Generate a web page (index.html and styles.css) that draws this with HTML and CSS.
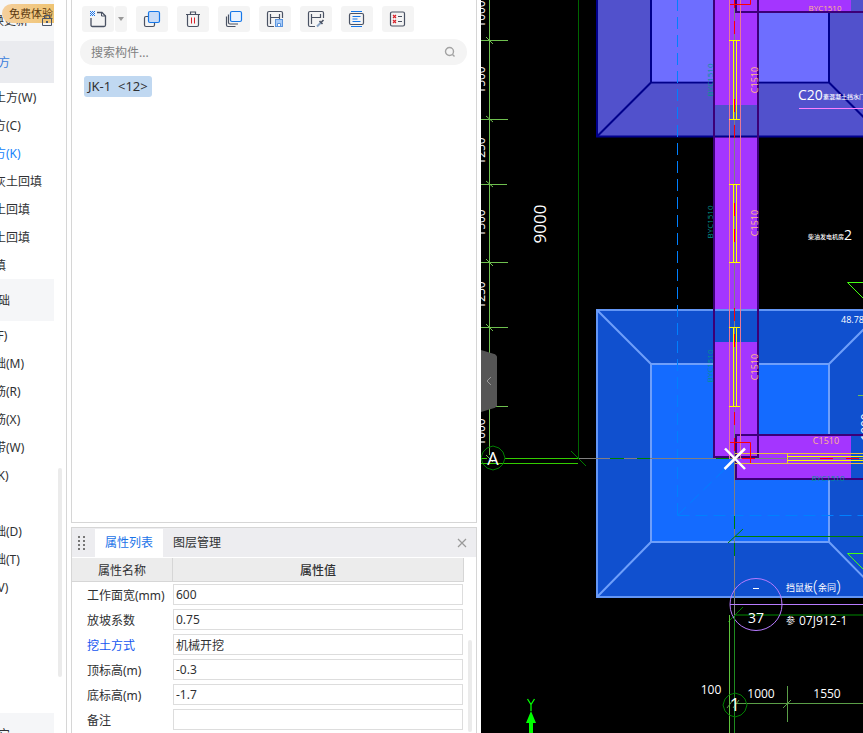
FILE: index.html
```
<!DOCTYPE html>
<html lang="zh-CN">
<head>
  <meta charset="UTF-8">
  <meta name="viewport" content="width=device-width, initial-scale=1.0">
  <title>构件列表</title>
  <link rel="stylesheet" href="styles.css">
</head>
<body>
  <!-- 模块导航 -->
  <nav class="sidebar">
    <div class="sidebar-top">
      <a href="#" class="top-link">切换更新</a>
      <svg class="lock" width="10" height="12" viewBox="0 0 10 12"><path d="M0.5 4.5h9v7h-9zM2.5 4V1.5h5V4" fill="none" stroke="#4a5568"/><path d="M4 7h2v2H4z" fill="#4a5568"/></svg>
      <span class="trial-badge">免费体验</span>
    </div>
    <a href="#" class="group active">土方</a>
    <ul class="nav-list">
      <li><a href="#">大开挖土方(W)</a></li>
      <li><a href="#">基槽土方(C)</a></li>
      <li><a href="#" class="current">基坑土方(K)</a></li>
      <li><a href="#">大开挖灰土回填</a></li>
      <li><a href="#">基槽灰土回填</a></li>
      <li><a href="#">基坑灰土回填</a></li>
      <li><a href="#">房心回填</a></li>
    </ul>
    <a href="#" class="group">基础</a>
    <ul class="nav-list nav-list-base">
      <li><a href="#">基础梁(F)</a></li>
      <li><a href="#">筏板基础(M)</a></li>
      <li><a href="#">筏板主筋(R)</a></li>
      <li><a href="#">筏板负筋(X)</a></li>
      <li><a href="#">基础板带(W)</a></li>
      <li><a href="#">集水坑(K)</a></li>
      <li><a href="#">柱墩(Y)</a></li>
      <li><a href="#">独立基础(D)</a></li>
      <li><a href="#">条形基础(T)</a></li>
      <li><a href="#">桩承台(V)</a></li>
    </ul>
    <a href="#" class="group">其它</a>
    <div class="scroll-thumb nav-thumb"></div>
  </nav>

  <div class="panels">
    <!-- 构件列表 -->
    <section class="panel component-panel">
      <div class="toolbar">
        <div class="split-btn">
          <button class="tool-btn" aria-label="新建">
            <svg width="18" height="18" viewBox="0 0 18 18" fill="none"><path d="M8 2.500h5L16.500 6V15q0 1.500-1.500 1.500H3.500Q2 16.500 2 15V8" stroke="#4a5263" stroke-width="1.300"/><path d="M12.500 2.500V6h4" stroke="#4a5263"/><path d="M1 1h1v1H1zM3 1h1v1H3zM5 1h1v1H5zM2 2h1v1H2zM4 2h1v1H4zM1 3h1v1H1zM3 3h1v1H3zM5 3h1v1H5zM2 4h1v1H2zM4 4h1v1H4zM1 5h1v1H1zM3 5h1v1H3zM5 5h1v1H5z" fill="#1a73e8"/></svg>
          </button>
          <button class="tool-btn drop-btn" aria-label="更多">
            <svg width="6" height="4" viewBox="0 0 6 4"><path d="M0 0h6L3 4z" fill="#999"/></svg>
          </button>
        </div>
        <button class="tool-btn" aria-label="复制">
          <svg width="18" height="18" viewBox="0 0 18 18" fill="none"><path d="M5 6.500H3Q1.500 6.500 1.500 8v7q0 1.500 1.500 1.500h7q1.500 0 1.500-1.500v-2" stroke="#4a5263" stroke-width="1.200"/><rect x="5.500" y="1.500" width="11" height="11" rx="1.500" fill="#c9dcf7" stroke="#1677e8" stroke-width="1.200"/></svg>
        </button>
        <button class="tool-btn" aria-label="删除">
          <svg width="18" height="18" viewBox="0 0 18 18" fill="none"><path d="M2 4.500h14M6.500 4V2h5v2M3.500 5v10q0 1.500 1.500 1.500h8q1.500 0 1.500-1.500V5" stroke="#4a5263" stroke-width="1.200"/><path d="M7.500 7.500v6M10.500 7.500v6" stroke="#d9222a"/></svg>
        </button>
        <button class="tool-btn" aria-label="层间复制">
          <svg width="18" height="18" viewBox="0 0 18 18" fill="none"><path d="M3.500 4.500v8q0 1.500 1.500 1.500h8M1.500 6.500V15q0 1.500 1.500 1.500h7.500" stroke="#4a5263" stroke-width="1.200"/><rect x="5.500" y="1.500" width="11" height="10" rx="1.500" fill="#eaf3fe" stroke="#1677e8" stroke-width="1.200"/></svg>
        </button>
        <button class="tool-btn" aria-label="构件存盘">
          <svg width="18" height="18" viewBox="0 0 18 18" fill="none"><path d="M8 16.500H3Q1.500 16.500 1.500 15V3Q1.500 1.500 3 1.500h12q1.500 0 1.500 1.500v5M4.500 4v10M4.500 7.500h9M13.500 4v5" stroke="#4a5263" stroke-width="1.200"/><rect x="9.500" y="9.500" width="7" height="7" fill="#a9ccf8" stroke="#5b94dd"/><path d="M11.500 16v-2.500h3V16" fill="#fff" stroke="#5b94dd"/></svg>
        </button>
        <button class="tool-btn" aria-label="构件提取">
          <svg width="18" height="18" viewBox="0 0 18 18" fill="none"><path d="M8 16.500H3Q1.500 16.500 1.500 15V3Q1.500 1.500 3 1.500h12q1.500 0 1.500 1.500v5M4.500 4v10M4.500 7.500h9M13.500 4v4" stroke="#4a5263" stroke-width="1.200"/><path d="M10 16.500l4-4" stroke="#8aa4c4" stroke-width="2"/><path d="M12.500 11l3 3M14 12.500l2.500-2.500" stroke="#4a5263" stroke-width="1.600"/></svg>
        </button>
        <button class="tool-btn" aria-label="列表显示">
          <svg width="18" height="18" viewBox="0 0 18 18" fill="none"><rect x="1.500" y="3.500" width="14" height="11" rx="1.500" stroke="#4a5263" stroke-width="1.200"/><path d="M3 1.500h11M3 16.500h11M4.500 6.500h8M4.500 9h5M4.500 11.500h8" stroke="#1677e8" stroke-width="1.200"/></svg>
        </button>
        <button class="tool-btn" aria-label="检查">
          <svg width="18" height="18" viewBox="0 0 18 18" fill="none"><rect x="1.500" y="2" width="14" height="14" rx="1.500" stroke="#4a5263" stroke-width="1.200"/><path d="M4 5l3 3M7 5L4 8M4 10l3 3M7 10l-3 3" stroke="#d9222a" stroke-width="1.200"/><path d="M9 6.500h4M9 11.500h4" stroke="#4a5263"/></svg>
        </button>
      </div>
      <div class="search">
        <input type="text" placeholder="搜索构件..." aria-label="搜索构件">
        <svg width="12" height="12" viewBox="0 0 12 12" fill="none" stroke="#a3a3a3" stroke-width="1.400"><circle cx="5.500" cy="5.500" r="4"/><path d="M8.500 8.500l2 2"/></svg>
      </div>
      <button class="component-item">JK-1&nbsp; &lt;12&gt;</button>
    </section>

    <!-- 属性列表 -->
    <section class="panel property-panel">
      <div class="tabs">
        <svg class="grip" width="8" height="16" viewBox="0 0 8 16" fill="#777"><path d="M0 1h2v2H0zM5 1h2v2H5zM0 5h2v2H0zM5 5h2v2H5zM0 9h2v2H0zM5 9h2v2H5zM0 13h2v2H0zM5 13h2v2H5z"/></svg>
        <button class="tab active">属性列表</button>
        <button class="tab">图层管理</button>
        <button class="close-btn" aria-label="关闭">
          <svg width="10" height="10" viewBox="0 0 10 10" stroke="#999" stroke-width="1.200"><path d="M1 1l8 8M9 1L1 9"/></svg>
        </button>
      </div>
      <table class="props">
        <thead>
          <tr><th class="name-col">属性名称</th><th>属性值</th></tr>
        </thead>
        <tbody>
          <tr><td><label for="p-width">工作面宽(mm)</label></td><td><input id="p-width" type="text" value="600"></td></tr>
          <tr><td><label for="p-slope">放坡系数</label></td><td><input id="p-slope" type="text" value="0.75"></td></tr>
          <tr><td><label for="p-mode" class="public">挖土方式</label></td><td><input id="p-mode" type="text" value="机械开挖"></td></tr>
          <tr><td><label for="p-top">顶标高(m)</label></td><td><input id="p-top" type="text" value="-0.3"></td></tr>
          <tr><td><label for="p-bottom">底标高(m)</label></td><td><input id="p-bottom" type="text" value="-1.7"></td></tr>
          <tr><td><label for="p-note">备注</label></td><td><input id="p-note" type="text"></td></tr>
        </tbody>
      </table>
      <div class="scroll-thumb prop-thumb"></div>
    </section>
  </div>

  <!-- 绘图区 -->
  <main class="canvas">
    <svg class="drawing" viewBox="481 0 382 733" preserveAspectRatio="xMinYMin slice" fill="none">
      <!-- 基坑 -->
      <path d="M597 -150H883V136.500H597z" fill="#5151cc" stroke="#00008b" stroke-width="2"/>
      <path d="M651 -100H829V82.500H651zM651 82.500L597 136.500M829 82.500L883 136.500" stroke="#00008b" stroke-width="2"/>
      <path d="M652 0H828V81.500H652z" fill="#6e6eff"/>
      <path d="M597 310H883V597H597z" fill="#1050cf" stroke="#6396f5" stroke-width="2"/>
      <path d="M651 364H829V542H651z" fill="#146bff"/>
      <path d="M651 364H829V542H651zM651 364L597 310M829 364L883 310M651 542L597 597M829 542L883 597" stroke="#6f9ffa" stroke-width="2"/>

      <!-- 墙体 -->
      <path d="M714 0H758V105H714zM714 137.500H758V309H714zM714 342H758V457H714zM736 435H851V479H736zM736 0H851V12H736z" fill="#a435ff"/>
      <path d="M714 0V457H758V0M870 435H736V479H870M736 0V12H870" stroke="#3c0078" stroke-width="2"/>

      <!-- 虚线轮廓 -->
      <path d="M677.500 -1V516M677.500 515.500H870M677.500 515.500L735 459" stroke="#0080ff" stroke-dasharray="12 6"/>

      <!-- 轴线 -->
      <path d="M734.500 0V620M578 458.500H863" stroke="#808080"/>
      <path d="M610 458.500h14M637 458.500h13M716 458.500h14M734.500 516v13M734.500 543v13" stroke="#007d00"/>
      <path d="M729.500 0V459M740.500 0V459" stroke="#e87898"/>
      <path d="M733.500 40V119M736.500 40V119M729 40.500h11M729 119.500h11M733.500 184V262M736.500 184V262M729 184.500h11M729 262.500h11M733.500 327V406M736.500 327V406M729 327.500h11M729 406.500h11" stroke="#ff0"/>
      <path d="M735 453.500H863M735 463.500H863M787.500 453v10" stroke="#e5c13c"/>
      <path d="M787 456.500H863M787 460.500H863" stroke="#ff0"/>
      <path d="M734.500 0v8M734.500 21v13M734.500 99v13M734.500 125v13M734.500 203v13M734.500 229v13M734.500 308v13M734.500 334v13M734.500 412v13M734.500 438v13M742 458.500h13M820 458.500h13M846 458.500h13M730 4.500h20.500V0M730 442.500h20.500V463" stroke="#f00"/>
      <path d="M725 448.500L745 469M745 448.500L724.500 469" stroke="#fff" stroke-width="2.500"/>

      <!-- 左侧尺寸 -->
      <path d="M489.500 0V455M481 40.500h27M481 119.500h27M481 184.500h26M481 262.500h27M481 327.500h27M481 406.500h27" stroke="#6fc04f"/>
      <path d="M486 37l7 7M486 116l7 6M486 181l7 6M486 259l7 7M486 324l7 7M486 455l7 7" stroke="#6fc04f"/>
      <path d="M578.500 0V458" stroke="#006400"/>
      <path d="M505 458.500H578M481 463.500H578M481 458.500H487" stroke="#3c0"/>
      <path d="M571 451L586 466" stroke="#007d00"/>
      <path d="M493 446l6 2 4 4 2 6-2 6-4 4-6 2-6-2-4-4-2-6 2-6 4-4z" stroke="#007d00"/>
      <g class="dim">
        <text transform="translate(485 14) rotate(-90)">1000</text>
        <text transform="translate(485 80) rotate(-90)">1500</text>
        <text transform="translate(485 151) rotate(-90)">1250</text>
        <text transform="translate(485 223) rotate(-90)">1500</text>
        <text transform="translate(485 295) rotate(-90)">1250</text>
        <text transform="translate(485 432) rotate(-90)">1000</text>
        <text transform="translate(870 427) rotate(-90)">1000</text>
      </g>
      <text class="axis-dim" transform="translate(546 224) rotate(-90)">9000</text>
      <text class="axis-name" x="493" y="465">A</text>

      <!-- 窗编号 -->
      <g class="win-top">
        <text transform="translate(713 80) rotate(-90)">BYC1510</text>
        <text transform="translate(713 222) rotate(-90)">BYC1510</text>
        <text transform="translate(713 366) rotate(-90)">BYC1510</text>
        <text x="828" y="481">BYC1510</text>
      </g>
      <g class="win">
        <text transform="translate(758 80) rotate(-90)">C1510</text>
        <text transform="translate(758 223) rotate(-90)">C1510</text>
        <text transform="translate(758 367) rotate(-90)">C1510</text>
        <text x="826" y="444">C1510</text>
      </g>
      <text class="win-small" x="825" y="11">BYC1510</text>

      <!-- 标注文字 -->
      <text class="note" x="798" y="100">C20</text>
      <text class="note-cn" x="823" y="99">素混凝土挡水门</text>
      <path d="M799 108.500H863" stroke="#ff80ff"/>
      <text class="note-cn" x="808" y="239">柴油发电机房</text>
      <text class="note" x="844" y="240">2</text>
      <path d="M863 282.500H847.500L863 298M863 553.500H847.500L863 569" stroke="#4f1"/>
      <text class="level" x="841" y="323">48.780</text>
      <path d="M858 395.500h5" stroke="#6fc04f"/>

      <!-- 详图索引 -->
      <path d="M735 536.500H863M728 543L743 529" stroke="#007d00"/>
      <path d="M735 615H863" stroke="#004600" stroke-width="2"/>
      <path d="M728 622L743 607" stroke="#007d00"/>
      <circle cx="756" cy="604.500" r="26" stroke="#b77bff"/>
      <path d="M730 604.500H863" stroke="#b77bff"/>
      <path d="M753 588.500h6" stroke="#fff"/>
      <text class="index-no" x="756" y="623">37</text>
      <text class="detail-cn" x="786" y="591">挡鼠板</text>
      <text class="bracket" x="813" y="592">(</text>
      <text class="detail-cn" x="818" y="591">余同</text>
      <text class="bracket" x="836" y="592">)</text>
      <text class="detail-cn" x="786" y="624">参</text>
      <text class="code" x="799" y="625">07J912-1</text>

      <!-- 底部尺寸 -->
      <path d="M729.500 615V733" stroke="#5fc43c"/>
      <path d="M734.500 616V733" stroke="#1f8a1f"/>
      <path d="M735 703.500H863M787.500 686v36M783 708l8-8M727 708l6-8M733 708l6-8" stroke="#5a9e47"/>
      <path d="M735 693l6 2 4 4 2 6-2 6-4 4-6 2-6-2-4-4-2-6 2-6 4-4z" stroke="#007d00"/>
      <g class="dim">
        <text x="711" y="694">100</text>
        <text x="761" y="698">1000</text>
        <text x="827" y="698">1550</text>
      </g>
      <text class="axis-name" x="735" y="711">1</text>

      <!-- 坐标系 -->
      <path d="M531 711L536 723H533V733H529V723H526z" fill="#0f0"/>
      <path d="M527.500 699L531 704.500L534.500 699M531 704V711" stroke="#0f0" stroke-width="1.300"/>
    </svg>
    <button class="collapse-btn" aria-label="收起">
      <svg width="6" height="10" viewBox="0 0 6 10" fill="none" stroke="#999"><path d="M5 1L1 5l4 4"/></svg>
    </button>
  </main>
</body>
</html>
```

FILE: styles.css
```
:root {
  --text: #303133;
  --blue: #1a73e8;
  --line: #d6d6d6;
  --soft: #f4f4f4;
  --font-family: "Noto Sans", "Noto Sans CJK SC", sans-serif;
  --cad-font: "Open Sans", "Noto Sans CJK SC", sans-serif;
}

* {
  box-sizing: border-box;
  margin: 0;
  padding: 0;
}

body {
  display: flex;
  height: 100vh;
  overflow: hidden;
  font-family: var(--font-family);
  font-size: 12px;
  color: var(--text);
  background: #fff;
}

button,
input {
  font: inherit;
  color: inherit;
  border: none;
  background: none;
}

button {
  cursor: pointer;
}

a {
  color: inherit;
  text-decoration: none;
}

/* sidebar */
.sidebar {
  position: relative;
  flex: 0 0 67px;
  padding-right: 12px;
  border-right: 1px solid var(--line);
  overflow: hidden;
}

.sidebar-top {
  position: relative;
  height: 41px;
  overflow: hidden;
  background: #f5f6f8;
}

.top-link {
  display: block;
  margin-left: -20px;
  line-height: 42px;
}

.lock {
  position: absolute;
  z-index: 1;
  right: 2px;
  top: 14px;
}

.trial-badge {
  position: absolute;
  left: 2px;
  top: 4px;
  padding-left: 7px;
  width: 60px;
  font-size: 11px;
  line-height: 19px;
  white-space: nowrap;
  color: #5c3a10;
  border-radius: 10px;
  background: linear-gradient(90deg, #f5cf9c, #eec26c);
}

.group {
  display: block;
  height: 42px;
  line-height: 44px;
  text-indent: -14px;
  background: #f5f6f8;
}

.group.active {
  color: #3b7ddd;
  background: #eaebef;
}

.nav-list {
  list-style: none;
  margin-left: -42px;
}

.nav-list-base {
  padding-bottom: 112px;
}

.nav-list a {
  display: block;
  height: 28px;
  line-height: 30px;
  white-space: nowrap;
}

.nav-list a.current {
  color: #1683fb;
}

.scroll-thumb {
  position: absolute;
  width: 4px;
  border-radius: 2px;
  background: #ebebeb;
}

.nav-thumb {
  right: 4px;
  top: 468px;
  height: 209px;
}

/* middle panels */
.panels {
  flex: 0 0 414px;
  display: flex;
  flex-direction: column;
  gap: 4px;
  padding: 0 4px;
}

.panel {
  border: 1px solid var(--line);
}

.component-panel {
  flex: 1;
  border-top: none;
  padding: 6px 9px 0 8px;
}

.toolbar {
  display: flex;
  gap: 9px;
  padding-left: 2px;
}

.tool-btn {
  display: flex;
  align-items: center;
  justify-content: center;
  width: 32px;
  height: 26px;
  border-radius: 3px;
  background: var(--soft);
}

.tool-btn:hover {
  background: #e8eef7;
}

.split-btn {
  display: flex;
  gap: 1px;
}

.drop-btn {
  width: 12px;
}

.search {
  display: flex;
  align-items: center;
  height: 26px;
  margin-top: 7px;
  padding: 0 11px;
  border-radius: 13px;
  background: var(--soft);
}

.search input {
  flex: 1;
  outline: none;
}

.search input::placeholder {
  color: #808080;
}

.component-item {
  display: block;
  height: 21px;
  margin: 11px 0 0 4px;
  padding: 0 4px;
  font-size: 13px;
  line-height: 21px;
  border-radius: 3px;
  background: #c0d8f1;
}

.property-panel {
  position: relative;
  flex: 0 0 206px;
  border-bottom: none;
}

.tabs {
  display: flex;
  align-items: center;
  height: 29px;
  padding-right: 9px;
  background: #ededf0;
}

.grip {
  margin: 0 9px 0 6px;
}

.tab {
  height: 28px;
  padding: 0 10px 2px;
}

.tab.active {
  color: var(--blue);
  background: #fff;
}

.close-btn {
  display: flex;
  margin-left: auto;
}

.props {
  width: calc(100% - 12px);
  margin-top: 1px;
  border-collapse: separate;
  border-spacing: 0;
  table-layout: fixed;
}

.props th {
  height: 24px;
  font-weight: 500;
  background: #ececec;
  border-right: 1px solid var(--line);
  border-bottom: 1px solid var(--line);
}

.props .name-col {
  width: 101px;
  font-weight: 400;
}

.props td {
  height: 25px;
  padding-right: 1px;
}

.props td:first-child {
  padding-left: 15px;
  white-space: nowrap;
}

.props input {
  display: block;
  width: 100%;
  height: 21px;
  padding: 0 2px;
  border: 1px solid #ddd;
}

.props .public {
  color: #1456f0;
}

.prop-thumb {
  right: 4px;
  bottom: 1px;
  height: 92px;
}

/* drawing area */
.canvas {
  position: relative;
  flex: 1;
  min-width: 0;
  background: #000;
}

.drawing {
  display: block;
  width: 100%;
  height: 100%;
  font-family: var(--cad-font);
}

.drawing text {
  fill: #fff;
}

.dim text {
  font-size: 12px;
  text-anchor: middle;
}

.axis-dim {
  font-size: 17px;
  text-anchor: middle;
}

.axis-name {
  font-size: 18px;
  text-anchor: middle;
}

.drawing .win-top text {
  font-size: 8px;
  text-anchor: middle;
  fill: #00938f;
}

.drawing .win text {
  font-size: 9px;
  text-anchor: middle;
  fill: #ffb98a;
}

.drawing .win-small {
  font-size: 8px;
  text-anchor: middle;
  fill: #ffb98a;
}

.note {
  font-size: 14px;
}

.note-cn {
  font-size: 6px;
  font-weight: 500;
}

.detail-cn {
  font-size: 9px;
}

.bracket {
  font-size: 17px;
  font-weight: 300;
}

.code {
  font-size: 12px;
}

.level {
  font-size: 9px;
}

.index-no {
  font-size: 14px;
  text-anchor: middle;
}

.collapse-btn {
  position: absolute;
  left: 0;
  top: 350px;
  display: flex;
  align-items: center;
  justify-content: center;
  width: 16px;
  height: 62px;
  background: #555;
  clip-path: polygon(0 0, 88% 7%, 100% 10%, 100% 90%, 88% 93%, 0 100%);
}
```
